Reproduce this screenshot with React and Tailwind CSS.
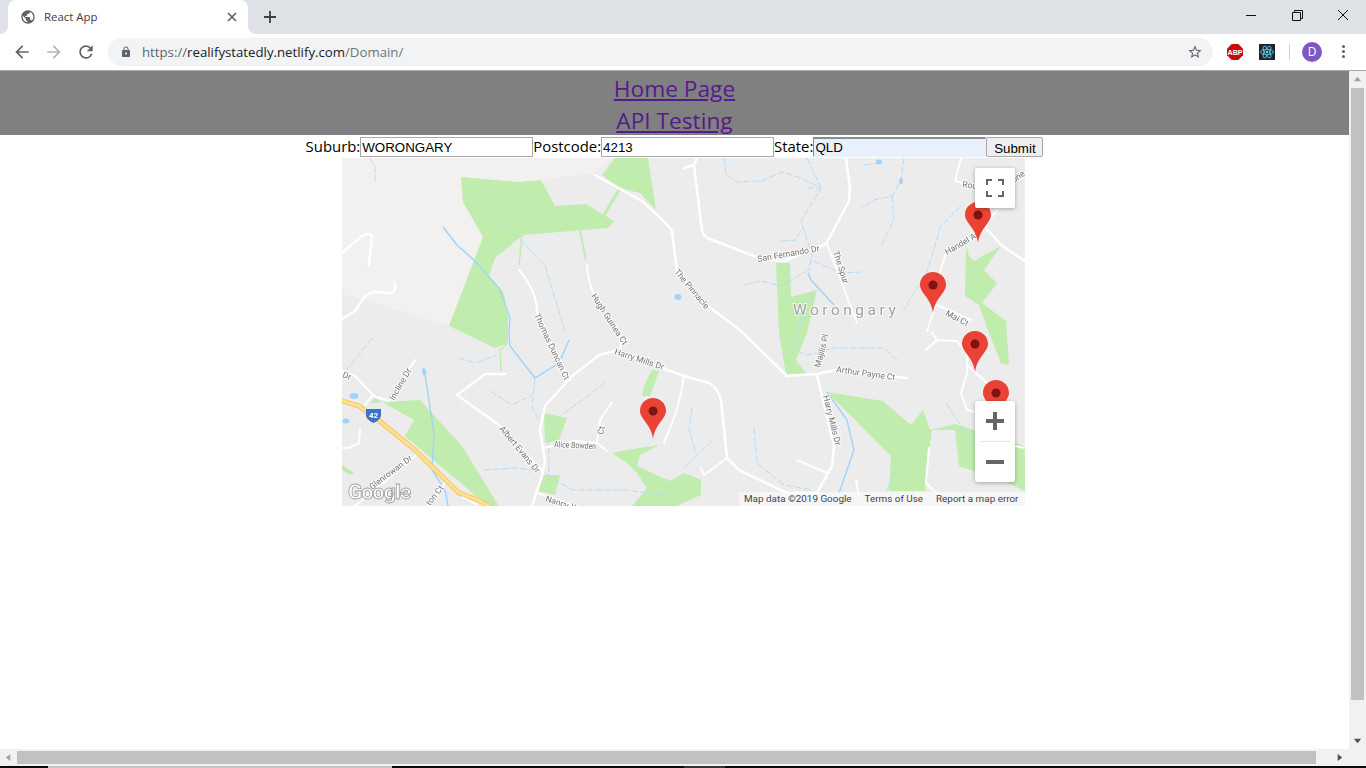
import React from "react";

const UI = "font-['Open_Sans','Noto_Sans',sans-serif]";

const greens = [
  "119,19 177,24 199,22 213,48 244,46 272,63 266,70 181,77 153,100 147,118 162,135 166,160 166,185 153,190 122,175 107,168 141,79 121,44",
  "273,0 306,0 314,52 298,35 278,30 260,17",
  "624,87 627,98 632,103 659,88 642,112 655,125 640,145 664,163 667,207 659,205 647,175 637,147 623,138",
  "434,105 448,105 449,139 475,132 465,175 454,202 464,215 444,217 437,175",
  "485,234 541,243 569,267 581,252 588,272 613,266 683,288 683,333 662,323 617,308 613,272 590,272 584,315 583,333 547,333 549,298",
  "78,242 120,288 158,350 147,350 127,332 63,278 72,262 33,240 28,245",
  "310,212 317,213 308,238 300,238 302,228",
  "202,255 225,260 217,282 203,285",
  "200,317 218,317 213,337 197,333",
  "270,295 285,292 317,287 298,297 295,308 328,323 342,315 359,322 359,337 335,348 290,348 305,330 295,315 285,305",
  "0,307 12,315 8,317 0,312",
];

const roads = [
  ["M0 95 L20 78 Q27 74 30 78 L27 107", 2.5],
  ["M0 161 L13 153 L23 138 Q28 134 35 134 L50 135 Q55 131 52 124", 2.5],
  ["M177 112 Q195 133 195 155 L228 222", 2],
  ["M245 107 Q246 125 253 138 L278 175 L279 195", 2],
  ["M253 17 L300 43 Q330 70 330 73 L335 113 L362 145 L399 173 L445 218 L475 216 L494 212 L565 220", 2.5],
  ["M342 10 L352 7 L355 0 M352 7 L360 73 Q362 78 365 80 L417 100 L442 103 L484 86 L507 43 L508 30 L504 0", 2.5],
  ["M485 86 L515 165", 1.8],
  ["M619 0 L613 23 L632 28", 2],
  ["M647 53 L644 70 L659 87 L683 103", 2.5],
  ["M655 52 L635 78 L605 92 L597 117 L592 153 L585 173", 2],
  ["M595 147 L629 162", 2],
  ["M590 175 L595 182 L615 183 L625 195 L625 215 L619 235 L625 252 L635 254 M595 182 L584 192 M625 207 L645 225 M673 288 L683 290", 2],
  ["M342 218 L320 210 L272 193 L257 197 L230 218 L203 248 L198 272 L203 302 L200 318 L190 348", 2.5],
  ["M342 218 Q338 250 322 285", 2],
  ["M342 218 L367 225 Q376 230 379 242 L385 300 L397 312 L445 335 L475 335 L490 308 L492 288 L475 217", 2.5],
  ["M385 300 L362 317 L359 310", 2],
  ["M455 302 L485 315", 2],
  ["M514 322 L517 338", 2],
  ["M587 290 L584 325 L597 338", 2],
  ["M73 202 L47 243 L32 238 L13 218 L0 213 M30 238 L23 247", 2],
  ["M163 216 L143 216 L115 237 L157 267 L200 313", 2.5],
  ["M202 290 L233 283 L255 285 L265 293 M255 285 L258 262 L270 244", 2],
  ["M195 335 L233 348", 2],
  ["M13 348 L77 295", 2],
  ["M103 325 L87 348", 2],
  ["M18 272 L17 285 L7 290 L0 290", 2],
];

const solidWater = [
  "M101 69 L115 87 L133 103 L157 130 L168 160 L167 175 L168 188 L193 220 L217 205 L227 182",
  "M82 210 L92 275 L90 312 L103 332 L106 348",
  "M466 115 L469 122 L492 147",
  "M485 234 L505 262 L512 292 L497 335",
];

const thinWater = [
  "M28 0 L33 8 L33 25",
  "M382 0 L384 17 L395 24 L419 23 L440 14 L459 20 L479 30 L459 63 L470 97 L467 113",
  "M465 0 L479 30 M465 30 L479 30",
  "M439 83 L454 82 L459 72",
  "M402 127 L420 123 L439 128 L465 113",
  "M472 103 L499 115 L519 114",
  "M470 133 L455 175 L455 193 L465 197 L492 190 L542 190 L555 202",
  "M522 7 L539 5",
  "M562 0 L559 23 L550 38 L532 42 L519 50",
  "M550 38 L552 62 L539 88",
  "M619 48 L599 68 L585 113 L562 152",
  "M350 250 L347 272 L354 295",
  "M370 283 L342 310",
  "M412 270 L415 305 L442 327 L470 332",
  "M555 310 L545 333",
  "M604 245 L635 292 L660 312",
  "M148 233 L170 247 L190 237",
  "M117 200 L133 205 L155 197",
  "M263 225 L213 262 L207 285 L207 315",
  "M142 312 L173 310 L200 313 L230 332 L283 332 L328 338",
  "M30 180 L5 212",
  "M150 59 L177 80 L203 108 L223 173",
  "M193 220 L190 248 L197 263",
];

const labels = [
  ["San Fernando Dr", 416, 104, -10],
  ["The Spur", 491, 94, 72],
  ["The Pinnacle", 332, 114, 50],
  ["Hugh Guinea Ct", 249, 138, 57],
  ["Thomas Duncan Ct", 192, 157, 65],
  ["Harry Mills Dr", 272, 196, 18],
  ["Incline Dr", 52, 243, -60],
  ["Albert Evans Dr", 157, 271, 50],
  ["Alice Bowden", 212, 289, 3, 42],
  ["Ct", 261, 277, -78],
  ["Nancy Y", 203, 343, 18],
  ["Glenrowan Dr", 30, 332, -37],
  ["ton Ct", 88, 348, -52],
  ["Majilis Pl", 478, 210, -75],
  ["Arthur Payne Ct", 494, 214, 8],
  ["Harry Mills Dr", 481, 238, 76],
  ["Mai Ct", 603, 157, 28],
  ["Handel Av", 605, 97, -30],
  ["Rou", 620, 29, 8],
  ["one", 672, 25, -35],
  ["Dr", 0, 219, 20],
];

const pins = [
  [636, 44],
  [591, 114],
  [633, 173],
  [654, 222],
  [311, 240],
];

function Pin({ x, y }) {
  return (
    <g transform={`translate(${x - 13} ${y})`}>
      <path d="M13 41 C12 33 8 27 4 22 C1.500 18.500 0 16 0 13 C0 5.500 5.800 0 13 0 C20.200 0 26 5.500 26 13 C26 16 24.500 18.500 22 22 C18 27 14 33 13 41 Z" fill="#ea4335" />
      <circle cx="13" cy="13" r="4.500" fill="#7e1410" />
    </g>
  );
}

function MapArt() {
  return (
    <svg viewBox="0 0 683 348" className="block w-[683px] h-[348px] blur-[0.35px]">
      <rect x="-2" y="-2" width="687" height="352" fill="#ececec" />
      <polygon points="-2,-2 273,-2 253,15 199,22 177,24 119,19 121,44 141,79 107,168 -2,135" fill="#f2f1f0" />
      {greens.map((p) => (
        <polygon key={p} points={p} fill="#c0ecae" />
      ))}
      <g stroke="#c0ecae" fill="none">
        <path d="M277 32 L262 57" strokeWidth="3" />
        <path d="M180 77 L177 107" strokeWidth="1.500" />
        <path d="M238 72 L244 102" strokeWidth="2" />
        <path d="M166 185 L158 192 L159 212" strokeWidth="1.500" />
      </g>
      <g fill="none" stroke="#b4dcfb" strokeWidth="1" strokeDasharray="7 2">
        {thinWater.map((d) => (
          <path key={d} d={d} />
        ))}
      </g>
      <g fill="none" stroke="#9fd3fb" strokeWidth="1.400">
        {solidWater.map((d) => (
          <path key={d} d={d} />
        ))}
      </g>
      <g fill="#9fd3fb">
        <ellipse cx="336" cy="139" rx="3.500" ry="3" />
        <path d="M81 209 L85 214 L82 218 L80 214 Z" />
        <ellipse cx="12" cy="238" rx="4.500" ry="3" />
        <ellipse cx="4" cy="263" rx="3.500" ry="2.500" />
        <ellipse cx="537" cy="4" rx="3" ry="2.500" />
        <ellipse cx="559" cy="23" rx="2" ry="3" />
      </g>
      <g fill="none" stroke="#ffffff" strokeLinecap="round" strokeLinejoin="round">
        {roads.map(([d, w]) => (
          <path key={d} d={d} strokeWidth={w} />
        ))}
      </g>
      <path d="M0 243 L17 248 L40 265 L73 292 L117 335 L136 342 L150 350" fill="none" stroke="#f6cb6c" strokeWidth="5" />
      <path d="M0 243 L17 248 L40 265 L73 292 L117 335 L136 342 L150 350" fill="none" stroke="#fde293" strokeWidth="2.500" />
      <path d="M120 339 L136 347" fill="none" stroke="#ffffff" strokeWidth="1.500" />
      <g className="font-['Roboto',sans-serif]" fontSize="8.500" fill="#757575" stroke="#ffffff" strokeWidth="2" style={{ paintOrder: "stroke" }} strokeOpacity="0.8">
        {labels.map(([t, x, y, r, len]) => (
          <text key={t + x} x={x} y={y} transform={`rotate(${r} ${x} ${y})`} textLength={len} lengthAdjust={len ? "spacingAndGlyphs" : undefined}>
            {t}
          </text>
        ))}
      </g>
      <text x="451" y="157" fontSize="15.500" letterSpacing="3.500" fill="#a2a2a2" stroke="#ffffff" strokeWidth="2" strokeOpacity="0.8" style={{ paintOrder: "stroke" }} className="font-['Roboto',sans-serif]">
        Worongary
      </text>
      <path d="M24 251 H39 V258 Q38 262 31.500 265 Q25 262 24 258 Z" fill="#3a72c4" />
      <text x="31.500" y="260" textAnchor="middle" fontSize="8" fontWeight="700" fill="#ffffff" className="font-['Roboto',sans-serif]">42</text>
      <text x="6" y="341" fontSize="21" fontWeight="700" fill="#ffffff" stroke="#9c9c9c" strokeWidth="0.800" fillOpacity="0.9" className="font-['Roboto',sans-serif]" textLength="63">Google</text>
      {pins.map(([x, y]) => (
        <Pin key={x} x={x} y={y} />
      ))}
    </svg>
  );
}

function Mat({ d, className }) {
  return (
    <svg viewBox="0 0 24 24" className={className} fill="currentColor">
      <path d={d} />
    </svg>
  );
}

function Browser() {
  return (
    <div className={`${UI} shrink-0`}>
      <div className="h-[34px] bg-[#dee1e6] flex items-center pl-[8px]">
        <div className="relative w-[240px] h-[34px] bg-white rounded-t-[8px] flex items-center pl-[12px] pr-[11px]">
          <svg viewBox="0 0 8 8" className="absolute left-[-8px] bottom-0 w-[8px] h-[8px]" fill="#ffffff"><path d="M8 0V8H0C4.400 8 8 4.400 8 0Z" /></svg>
          <svg viewBox="0 0 8 8" className="absolute right-[-8px] bottom-0 w-[8px] h-[8px]" fill="#ffffff"><path d="M0 0V8H8C3.600 8 0 4.400 0 0Z" /></svg>
          <Mat className="w-[16px] h-[16px] text-[#5f6368] shrink-0" d="M12 2C6.480 2 2 6.480 2 12s4.480 10 10 10 10-4.480 10-10S17.520 2 12 2zm-1 17.930c-3.950-.490-7-3.850-7-7.930 0-.620.080-1.210.210-1.790L9 15v1c0 1.100.900 2 2 2v1.930zm6.900-2.540c-.260-.810-1-1.390-1.900-1.390h-1v-3c0-.550-.450-1-1-1H8v-2h2c.550 0 1-.450 1-1V7h2c1.100 0 2-.900 2-2v-.410c2.930 1.190 5 4.060 5 7.410 0 2.080-.800 3.970-2.100 5.390z" />
          <span className="ml-[8px] text-[11.400px] text-[#3c4043] leading-none flex-1">React App</span>
          <svg viewBox="0 0 10 10" className="w-[10px] h-[10px] text-[#5f6368]" stroke="currentColor" strokeWidth="1.700" fill="none"><path d="M1 1L9 9M9 1L1 9" /></svg>
        </div>
        <svg viewBox="0 0 12 12" className="w-[12px] h-[12px] ml-[16px] text-[#3c4043]" stroke="currentColor" strokeWidth="1.800" fill="none"><path d="M6 0V12M0 6H12" /></svg>
        <div className="flex-1" />
        <div className="flex items-center h-[34px] pb-[4px]">
          <div className="w-[46px] flex justify-center"><div className="w-[10px] h-[1px] bg-[#111]" /></div>
          <div className="w-[46px] flex justify-center">
            <svg viewBox="0 0 11 11" className="w-[11px] h-[11px]" stroke="#111" fill="none"><path d="M.5 2.500H8.500V10.500H.5Z" /><path d="M2.500 2.500V.5H10.500V8.500H8.500" /></svg>
          </div>
          <div className="w-[46px] flex justify-center">
            <svg viewBox="0 0 12 12" className="w-[12px] h-[12px]" stroke="#111" fill="none"><path d="M1 1L11 11M11 1L1 11" /></svg>
          </div>
        </div>
      </div>
      <div className="h-[37px] bg-white border-b border-[#a9a9a9] flex items-center pb-[1px]">
        <div className="flex items-center pl-[12px] w-[108px]">
          <Mat className="w-[20px] h-[20px] text-[#5f6368]" d="M20 11H7.830l5.590-5.590L12 4l-8 8 8 8 1.410-1.410L7.830 13H20v-2z" />
          <Mat className="w-[20px] h-[20px] ml-[12px] text-[#b1b3b6]" d="M12 4l-1.410 1.410L16.170 11H4v2h12.170l-5.580 5.590L12 20l8-8z" />
          <Mat className="w-[20px] h-[20px] ml-[12px] text-[#5f6368]" d="M17.650 6.350A7.958 7.958 0 0 0 12 4c-4.420 0-7.990 3.580-7.990 8s3.570 8 7.990 8c3.730 0 6.840-2.550 7.730-6h-2.080A5.990 5.990 0 0 1 12 18c-3.310 0-6-2.690-6-6s2.690-6 6-6c1.660 0 3.140.690 4.220 1.780L13 11h7V4l-2.350 2.350z" />
        </div>
        <div className="w-[1105px] h-[28px] bg-[#f1f3f4] rounded-full flex items-center pl-[12px] pr-[10px]">
          <Mat className="w-[12px] h-[12px] text-[#5f6368]" d="M18 8h-1V6c0-2.760-2.240-5-5-5S7 3.240 7 6v2H6c-1.100 0-2 .900-2 2v10c0 1.100.900 2 2 2h12c1.100 0 2-.900 2-2V10c0-1.100-.900-2-2-2zm-6 9c-1.100 0-2-.900-2-2s.900-2 2-2 2 .900 2 2-.900 2-2 2zm3.100-9H8.900V6c0-1.710 1.390-3.100 3.100-3.100 1.710 0 3.100 1.390 3.100 3.100v2z" />
          <span className="ml-[10px] mt-[2px] text-[13.230px] leading-none flex-1 whitespace-nowrap text-[#5f6368]">
            https://<span className="text-[#202124]">realifystatedly.netlify.com</span><span className="text-[#70757a]">/Domain/</span>
          </span>
          <Mat className="w-[16px] h-[16px] text-[#5f6368]" d="M22 9.240l-7.190-.620L12 2 9.190 8.630 2 9.240l5.460 4.730L5.820 21 12 17.270 18.180 21l-1.630-7.030L22 9.240zM12 15.400l-3.760 2.270 1-4.280-3.320-2.880 4.380-.380L12 6.100l1.710 4.040 4.380.380-3.320 2.880 1 4.280L12 15.400z" />
        </div>
        <div className="w-[14px]" />
        <svg viewBox="0 0 16 16" className="w-[16px] h-[16px]">
          <path d="M4.700 0H11.300L16 4.700V11.300L11.300 16H4.700L0 11.300V4.700Z" fill="#c70d0c" />
          <text x="8" y="11" textAnchor="middle" fontSize="8" fontWeight="700" fill="#fff" className="font-['Liberation_Sans',sans-serif]" textLength="15" lengthAdjust="spacingAndGlyphs">ABP</text>
        </svg>
        <div className="w-[16px]" />
        <svg viewBox="0 0 16 16" className="w-[16px] h-[16px]">
          <rect width="16" height="16" fill="#20232a" />
          <g fill="none" stroke="#61dafb" strokeWidth="0.800">
            <ellipse cx="8" cy="8" rx="6.500" ry="2.600" />
            <ellipse cx="8" cy="8" rx="6.500" ry="2.600" transform="rotate(60 8 8)" />
            <ellipse cx="8" cy="8" rx="6.500" ry="2.600" transform="rotate(120 8 8)" />
          </g>
          <circle cx="8" cy="8" r="1.300" fill="#61dafb" />
        </svg>
        <div className="w-[1px] h-[16px] bg-[#d0d3d6] ml-[14px]" />
        <div className="w-[20px] h-[20px] ml-[12px] rounded-full bg-[#7e57c2] text-white text-[12px] flex items-center justify-center">D</div>
        <div className="ml-[20px] flex flex-col gap-[2px]">
          <div className="w-[3px] h-[3px] rounded-full bg-[#5f6368]" />
          <div className="w-[3px] h-[3px] rounded-full bg-[#5f6368]" />
          <div className="w-[3px] h-[3px] rounded-full bg-[#5f6368]" />
        </div>
      </div>
    </div>
  );
}

function Arrow({ d, fill = "#a3a3a3", className }) {
  return (
    <svg viewBox="0 0 10 10" className={className} fill={fill}><path d={d} /></svg>
  );
}

const inputCls = "w-[173px] h-[20px] border border-[#a9a9a9] bg-white pl-[1px] pr-[2px] text-[13.330px] text-black font-['Liberation_Sans',sans-serif] outline-none";

function Page() {
  return (
    <div className={`flex-1 min-w-0 bg-white ${UI}`}>
      <div className="h-[64px] pt-[2px] bg-[#808080] text-center text-[22.700px] leading-[32px]">
        <div><a href="#" className="text-[#551a8b] underline">Home Page</a></div>
        <div><a href="#" className="text-[#551a8b] underline">API Testing</a></div>
      </div>
      <form className="h-[23px] flex justify-center items-end text-[14.900px] leading-[21px] text-black pb-[1px]">
        <label className="h-[21px]">Suburb:</label>
        <input className={inputCls} defaultValue="WORONGARY" readOnly />
        <label className="h-[21px]">Postcode:</label>
        <input className={inputCls} defaultValue="4213" readOnly />
        <label className="h-[21px]">State:</label>
        <input className={`${inputCls} !bg-[#e8f0fe] border-t-2 border-t-[#8c8c8c] border-l-[#8c8c8c] border-r-[#e8f0fe] border-b-[#e8f0fe]`} defaultValue="QLD" readOnly />
        <button type="button" className="w-[57px] h-[20px] pb-[1px] border border-[#a9a9a9] rounded-[2px] bg-[#efefef] text-[13.330px] text-black font-['Liberation_Sans',sans-serif]">Submit</button>
      </form>
      <div className="relative w-[683px] h-[348px] ml-[342px] overflow-hidden">
        <MapArt />
        <div className="absolute right-0 bottom-0 h-[14px] w-[286px] bg-white/50 flex items-center pl-[5px] text-[9.900px] text-[#444] whitespace-nowrap font-['Roboto',sans-serif]">
          <span>Map data ©2019 Google</span>
          <span className="ml-[13px]">Terms of Use</span>
          <span className="ml-[13px]">Report a map error</span>
        </div>
        <div className="absolute left-[633px] top-[10px] w-[40px] h-[40px] bg-white rounded-[2px] shadow-[0_1px_4px_rgba(0,0,0,0.3)] flex items-center justify-center">
          <svg viewBox="0 0 18 18" className="w-[18px] h-[18px]" fill="none" stroke="#666" strokeWidth="2"><path d="M1 6V1H6M12 1H17V6M17 12V17H12M6 17H1V12" /></svg>
        </div>
        <div className="absolute left-[633px] top-[243px] w-[40px] h-[81px] bg-white rounded-[2px] shadow-[0_1px_4px_rgba(0,0,0,0.3)] flex flex-col items-center">
          <div className="h-[40px] flex items-center">
            <svg viewBox="0 0 18 18" className="w-[18px] h-[18px]" fill="#666"><path d="M7 0H11V7H18V11H11V18H7V11H0V7H7Z" /></svg>
          </div>
          <div className="w-[30px] h-[1px] bg-[#e6e6e6]" />
          <div className="h-[40px] flex items-center">
            <svg viewBox="0 0 18 18" className="w-[18px] h-[18px]" fill="#666"><path d="M0 7H18V11H0Z" /></svg>
          </div>
        </div>
      </div>
    </div>
  );
}

export default function App() {
  return (
    <div className="h-screen flex flex-col overflow-hidden bg-white">
      <Browser />
      <div className="flex-1 min-h-0 flex">
        <Page />
        <div className="w-[17px] bg-[#f1f1f1] flex flex-col items-center">
          <div className="h-[17px] flex items-center justify-center">
            <Arrow className="w-[9px] h-[9px]" d="M5 2L9 7H1Z" />
          </div>
          <div className="w-[13px] h-[612px] bg-[#c1c1c1]" />
          <div className="flex-1" />
          <div className="h-[17px] flex items-center justify-center">
            <Arrow className="w-[9px] h-[9px]" fill="#505050" d="M5 8L1 3H9Z" />
          </div>
        </div>
      </div>
      <div className="h-[17px] shrink-0 bg-[#f1f1f1] flex items-center">
        <div className="w-[17px] flex justify-center">
          <Arrow className="w-[9px] h-[9px]" d="M2 5L7 1V9Z" />
        </div>
        <div className="w-[1299px] h-[13px] bg-[#c1c1c1]" />
        <div className="w-[33px] pl-[19px] flex">
          <Arrow className="w-[9px] h-[9px]" fill="#505050" d="M8 5L3 9V1Z" />
        </div>
      </div>
      <div className="h-[2px] shrink-0 bg-[#0a0a0a] flex">
        <div className="w-[48px]" />
        <div className="w-[344px] bg-[#c4c4c4]" />
        <div className="w-[292px]" />
        <div className="w-[41px] bg-[#333]" />
      </div>
    </div>
  );
}
